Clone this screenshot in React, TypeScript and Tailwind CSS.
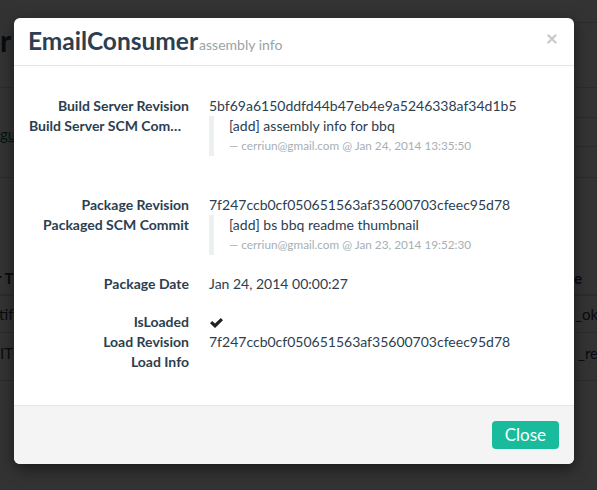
import { Fragment } from "react";

type Row = { label: string; value?: string; commit?: { message: string; author: string; date: string }; check?: boolean };

const groups: { rows: Row[]; gap: string }[] = [
  {
    gap: "mb-[39px]",
    rows: [
      { label: "Build Server Revision", value: "5bf69a6150ddfd44b47eb4e9a5246338af34d1b5" },
      {
        label: "Build Server SCM Commit",
        commit: { message: "[add] assembly info for bbq", author: "cerriun@gmail.com", date: "Jan 24, 2014 13:35:50" },
      },
    ],
  },
  {
    gap: "mb-[19px]",
    rows: [
      { label: "Package Revision", value: "7f247ccb0cf050651563af35600703cfeec95d78" },
      {
        label: "Packaged SCM Commit",
        commit: { message: "[add] bs bbq readme thumbnail", author: "cerriun@gmail.com", date: "Jan 23, 2014 19:52:30" },
      },
    ],
  },
  { gap: "mb-[18px]", rows: [{ label: "Package Date", value: "Jan 24, 2014 00:00:27" }] },
  {
    gap: "",
    rows: [
      { label: "IsLoaded", check: true },
      { label: "Load Revision", value: "7f247ccb0cf050651563af35600703cfeec95d78" },
      { label: "Load Info", value: "" },
    ],
  },
];

const CheckIcon = () => (
  <svg width="14" height="10" viewBox="0 0 14 10" className="mt-[6px] ml-[1px]">
    <path d="M0 5.2 L2.2 3 L5 5.6 L10.8 0 L13 2.2 L5 10 Z" fill="#222" />
  </svg>
);

const PageBehind = () => (
  <div className="flex flex-col text-[#2c3e50]">
    <div className="h-[88px] border-b border-[#ddd] flex justify-between">
      <span className="pt-[22px] text-[30px] font-bold leading-[36px]">r</span>
      <span className="h-[23px] w-[30px] border-b border-[#ddd]" />
    </div>
    <div className="h-[90px] border-b border-[#ddd] flex justify-between">
      <span className="pt-[36px] text-[15px] leading-[20px] text-[#0f6e5b] underline">gu</span>
      <span className="flex flex-col w-[30px]">
        <span className="h-[30px] border-b border-[#ddd]" />
        <span className="h-[29px] border-b border-[#ddd]" />
      </span>
    </div>
    <div className="h-[118px] border-b-2 border-[#ddd] flex justify-between items-end pb-[6px] font-bold text-[15px] leading-[20px]">
      <span className="-ml-[4px]">r T</span>
      <span className="w-[23px]">e</span>
    </div>
    <div className="h-[37px] border-b border-[#ddd] flex justify-between items-center text-[15px]">
      <span className="-ml-[1px]">tif</span>
      <span className="w-[22px]">_ok</span>
    </div>
    <div className="h-[48px] border-b border-[#ddd] flex justify-between items-start pt-[9px] text-[15px]">
      <span>IT</span>
      <span className="w-[23px] -mr-[4px]">_rec</span>
    </div>
  </div>
);

export default function App() {
  return (
    <div className="relative w-[597px] h-[490px] overflow-hidden bg-white font-['Lato','Noto_Sans',sans-serif]">
      <PageBehind />
      <div className="absolute inset-0 bg-black/80" />
      <div className="absolute left-[14px] top-[18px] w-[560px] rounded-[6px] bg-white shadow-[0_5px_15px_rgba(0,0,0,0.5)] overflow-hidden text-[#2c3e50]">
        <div className="h-[48px] px-[15px] flex items-center justify-between border-b border-[#e5e5e5]">
          <div className="flex items-baseline -mt-[2px] -ml-[1px]">
            <h3 className="text-[24.5px] font-bold leading-[31px] text-[#2c3e50]">EmailConsumer</h3>
            <small className="ml-[1px] text-[14px] text-[#98a3a6]">assembly info</small>
          </div>
          <button className="text-[21px] font-bold leading-none text-[#c8c8c8] -mt-[9px] mr-[1px]">×</button>
        </div>

        <div className="px-[15px] pt-[30px] pb-[33px] text-[14px] leading-[20px]">
          {groups.map((group, gi) => (
            <dl key={gi} className={`grid grid-cols-[160px_1fr] gap-x-[20px] ${group.gap}`}>
              {group.rows.map((row) => (
                <Fragment key={row.label}>
                  <dt className="text-right font-bold truncate">{row.label}</dt>
                  <dd className="min-h-[20px]">
                    {row.commit ? (
                      <blockquote className="border-l-[5px] border-[#ecf0f1] pl-[15px]">
                        <p>{row.commit.message}</p>
                        <footer className="text-[11.75px] text-[#a6afb4]">
                          — {row.commit.author} @ {row.commit.date}
                        </footer>
                      </blockquote>
                    ) : row.check ? (
                      <CheckIcon />
                    ) : (
                      row.value
                    )}
                  </dd>
                </Fragment>
              ))}
            </dl>
          ))}
        </div>

        <div className="border-t border-[#e5e5e5] bg-[#f4f4f4] p-[15px] flex justify-end">
          <button className="h-[28px] px-[13px] rounded-[4px] bg-[#18bc9c] text-white text-[17px] leading-[28px]">
            Close
          </button>
        </div>
      </div>
    </div>
  );
}
